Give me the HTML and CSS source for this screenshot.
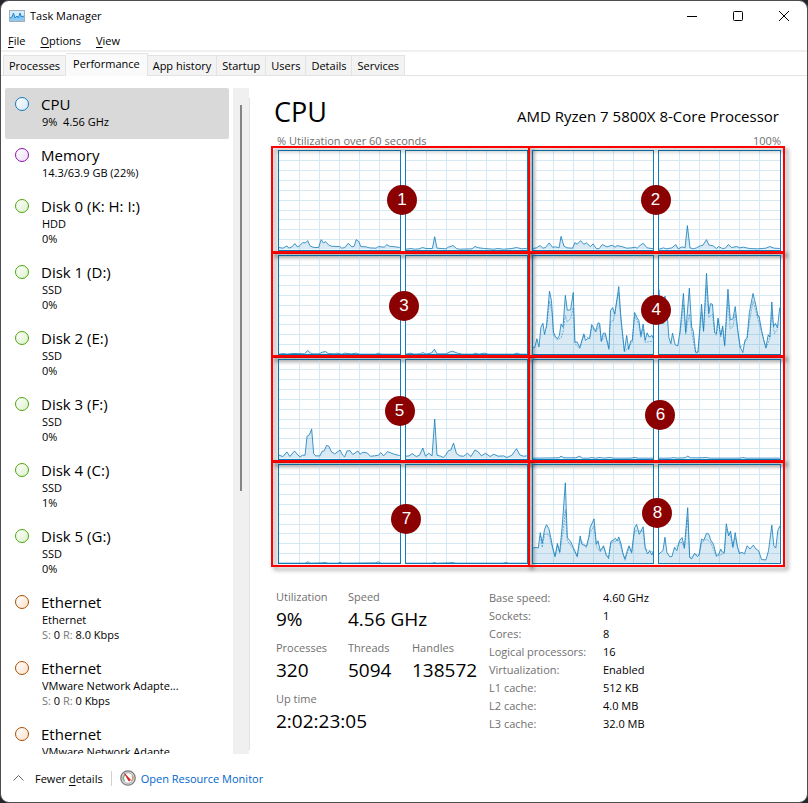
FILE: index.html
```html
<!DOCTYPE html>
<html lang="en">
<head>
<meta charset="utf-8">
<meta name="viewport" content="width=device-width, initial-scale=1">
<title>Task Manager</title>
<link rel="stylesheet" href="styles.css">
</head>
<body>
<div class="window">
  <header class="titlebar">
    <svg class="app-icon" viewBox="0 0 16 12" aria-hidden="true">
      <rect x=".5" y=".5" width="15" height="11" fill="#d5edfb" stroke="#a5adb3"/>
      <path d="M1 8 3 7 4.500 3 6 8 8 6 9.500 8 11 3 12.500 7 15 6V11H1Z" fill="#8bc9f2"/>
      <path d="M1 8 3 7 4.500 3 6 8 8 6 9.500 8 11 3 12.500 7 15 6" fill="none" stroke="#1c87cf"/>
    </svg>
    <h1 class="app-name">Task Manager</h1>
    <div class="window-controls">
      <button type="button" aria-label="Minimize"><svg viewBox="0 0 10 10"><path d="M0 5.500H10"/></svg></button>
      <button type="button" aria-label="Maximize"><svg viewBox="0 0 10 10"><rect x=".5" y=".5" width="9" height="9" rx="1"/></svg></button>
      <button type="button" aria-label="Close"><svg viewBox="0 0 10 10"><path d="M0 0 10 10M10 0 0 10"/></svg></button>
    </div>
  </header>
  <nav class="menu">
    <button type="button"><u>F</u>ile</button>
    <button type="button"><u>O</u>ptions</button>
    <button type="button"><u>V</u>iew</button>
  </nav>
  <div class="tabs" role="tablist">
    <button type="button" role="tab">Processes</button>
    <button type="button" role="tab" class="active" aria-selected="true">Performance</button>
    <button type="button" role="tab">App history</button>
    <button type="button" role="tab">Startup</button>
    <button type="button" role="tab">Users</button>
    <button type="button" role="tab">Details</button>
    <button type="button" role="tab">Services</button>
  </div>
  <main class="content">
    <ul class="devices">
      <li class="device cpu selected"><h2>CPU</h2><p>9%&nbsp; 4.56 GHz</p></li>
      <li class="device memory"><h2>Memory</h2><p>14.3/63.9 GB (22%)</p></li>
      <li class="device disk"><h2>Disk 0 (K: H: I:)</h2><p>HDD</p><p>0%</p></li>
      <li class="device disk"><h2>Disk 1 (D:)</h2><p>SSD</p><p>0%</p></li>
      <li class="device disk"><h2>Disk 2 (E:)</h2><p>SSD</p><p>0%</p></li>
      <li class="device disk"><h2>Disk 3 (F:)</h2><p>SSD</p><p>0%</p></li>
      <li class="device disk"><h2>Disk 4 (C:)</h2><p>SSD</p><p>1%</p></li>
      <li class="device disk"><h2>Disk 5 (G:)</h2><p>SSD</p><p>0%</p></li>
      <li class="device network"><h2>Ethernet</h2><p>Ethernet</p><p><span>S:</span> 0 <span>R:</span> 8.0 Kbps</p></li>
      <li class="device network"><h2>Ethernet</h2><p>VMware Network Adapte...</p><p><span>S:</span> 0 <span>R:</span> 0 Kbps</p></li>
      <li class="device network"><h2>Ethernet</h2><p>VMware Network Adapte...</p></li>
    </ul>
    <div class="scrollbar"><div class="thumb"></div></div>
    <section class="detail">
      <div class="heading"><h2>CPU</h2><p>AMD Ryzen 7 5800X 8-Core Processor</p></div>
      <div class="axis"><span>% Utilization over 60 seconds</span><span>100%</span></div>
      <div class="cores" id="cores"></div>
      <div class="stats">
        <dl class="live">
          <div><dt>Utilization</dt><dd>9%</dd></div>
          <div class="wide"><dt>Speed</dt><dd>4.56 GHz</dd></div>
          <div><dt>Processes</dt><dd>320</dd></div>
          <div><dt>Threads</dt><dd>5094</dd></div>
          <div><dt>Handles</dt><dd>138572</dd></div>
          <div class="wide"><dt>Up time</dt><dd>2:02:23:05</dd></div>
        </dl>
        <dl class="facts">
          <dt>Base speed:</dt><dd>4.60 GHz</dd>
          <dt>Sockets:</dt><dd>1</dd>
          <dt>Cores:</dt><dd>8</dd>
          <dt>Logical processors:</dt><dd>16</dd>
          <dt>Virtualization:</dt><dd>Enabled</dd>
          <dt>L1 cache:</dt><dd>512 KB</dd>
          <dt>L2 cache:</dt><dd>4.0 MB</dd>
          <dt>L3 cache:</dt><dd>32.0 MB</dd>
        </dl>
      </div>
    </section>
  </main>
  <footer class="footer">
    <button type="button" class="fewer">
      <svg viewBox="0 0 11 6" aria-hidden="true"><path d="M.5 5.500 5.500 .5 10.500 5.500"/></svg>
      <span>Fewer <u>d</u>etails</span>
    </button>
    <a class="monitor" href="#">
      <svg viewBox="0 0 16 16" aria-hidden="true">
        <circle cx="8" cy="8" r="7.200" fill="#e4e4e4" stroke="#77797b" stroke-width="1.300"/>
        <circle cx="8" cy="8" r="5.300" fill="#fff" stroke="#a8a8a8"/>
        <path d="M4.500 11A5 5 0 0 1 4.500 5" fill="none" stroke="#6aa06a"/>
        <path d="M12 5.500A5 5 0 0 1 11.500 11" fill="none" stroke="#e08a50"/>
        <path d="M4.500 3.500 10.500 10 9 11Z" fill="#d8101e" stroke="#d8101e" stroke-width=".8"/>
      </svg>
      <span>Open Resource Monitor</span>
    </a>
  </footer>
</div>
<script src="charts.js"></script>
</body>
</html>
```

FILE: styles.css
```css
* { box-sizing: border-box; margin: 0; padding: 0; }
body { background: #23272c; color: #000; font: 11px/15px "Open Sans", "Noto Sans", sans-serif; }
button { background: none; border: 0; font: inherit; color: inherit; }
u { text-underline-offset: 2px; }
h1, h2 { font-weight: 400; }

.window { display: flex; flex-direction: column; height: 100vh; background: #fff; border: 1px solid #4b4d50; border-radius: 9px; overflow: hidden; }

.titlebar { display: flex; align-items: center; height: 29px; padding-left: 8px; flex: none; }
.app-icon { width: 16px; height: 12px; }
.app-name { margin-left: 5px; font-size: 11px; }
.window-controls { display: flex; margin-left: auto; height: 100%; }
.window-controls button { display: grid; place-items: center; width: 46px; }
.window-controls svg { width: 10px; height: 10px; overflow: visible; fill: none; stroke: #000; stroke-width: 1px; }

.menu { display: flex; gap: 15px; height: 22px; padding: 3px 7px 2px; border-bottom: 2px solid #f0f0f0; flex: none; }

.tabs { display: flex; align-items: flex-end; height: 24px; padding-left: 2px; border-bottom: 1px solid #e3e3e3; flex: none; }
.tabs button { height: 20px; padding: 0 5px; background: #f3f3f3; border: 1px solid #e3e3e3; border-left: 0; border-bottom: 0; }
.tabs button:first-child { border-left: 1px solid #e3e3e3; }
.tabs .active { height: 23px; margin-bottom: -1px; padding: 0 7px 3px; background: #fafafa; }

.content { display: flex; flex: 1; min-height: 0; padding: 12px 0 0 4px; }
.devices { width: 224px; flex: none; list-style: none; overflow: hidden; }
.device { position: relative; padding: 6px 8px 10px 37px; border-radius: 2px; }
.device.selected { background: #d9d9d9; }
.device h2 { margin-left: -1px; font-size: 15px; line-height: 20px; }
.device p { white-space: nowrap; overflow: hidden; }
.device span { color: #777; }
.device::before { content: ""; position: absolute; left: 11px; top: 10px; width: 14px; height: 14px; border: 1px solid; border-radius: 50%; }
.device::before { left: 10px; top: 9px; box-sizing: border-box; }
.cpu::before { border-color: #117dbb; background: linear-gradient(135deg, #fff, #d5e9f5); }
.memory::before { border-color: #8b12ae; background: linear-gradient(135deg, #fff, #efdff5); }
.disk::before { border-color: #4da60c; background: linear-gradient(135deg, #fff, #dcf1cb); }
.network::before { border-color: #a74f01; background: linear-gradient(135deg, #fff, #fbe2cd); }

.scrollbar { width: 16px; margin-left: 4px; padding: 17px 7px; background: #f0f0f0; flex: none; }
.thumb { width: 2px; height: 61%; background: #858585; }

.detail { flex: 1; min-width: 0; margin: 10px 0 4px; padding: 0 26px 0 24px; border-left: 1px solid #e3e3e3; }
.heading { display: flex; justify-content: space-between; align-items: baseline; }
.heading h2 { font-size: 27px; line-height: 28px; }
.heading p { padding-right: 2px; font-size: 15px; line-height: 28px; }
.axis { display: flex; justify-content: space-between; margin-top: 3px; padding-left: 3px; color: #707070; }

.cores { display: grid; grid-template: repeat(4, 1fr) / 1fr 1fr; gap: 4px; height: 414px; margin: 2px 0 0 4px; }
.core { position: relative; display: grid; grid-template-columns: 1fr 1fr; gap: 4px; min-height: 0; }
.plot { width: 100%; height: 100%; min-height: 0; border: 1px solid #117dbb; overflow: hidden; }
.plot path { fill: none; vector-effect: non-scaling-stroke; }
.plot .grid { stroke: #d6e8f3; shape-rendering: crispEdges; }
.plot .area { fill: #117dbb; fill-opacity: .16; }
.plot .line { stroke: #117dbb; stroke-opacity: .8; }
.plot .kernel { stroke: #117dbb; stroke-opacity: .5; stroke-dasharray: 2 1; }
.frame { position: absolute; inset: -4px -2px -3px -7px; border: 2px solid #f00; filter: drop-shadow(3px 3px 2px rgba(0, 0, 0, .45)); }
.core:nth-child(even) .frame { inset: -4px -4px -3px -4px; }
.badge { position: absolute; z-index: 1; width: 30px; height: 30px; border-radius: 50%; transform: translate(-50%, -50%); background: #8b0000; color: #fff; font: 17px/30px "Liberation Sans", sans-serif; text-align: center; }

.stats { display: flex; margin: 25px 0 0 2px; }
.stats dt { color: #707070; }
.live { display: grid; grid-template-columns: 72px 64px 77px; row-gap: 7px; align-content: start; }
.live dt { line-height: 16px; }
.live dd { font-size: 19px; line-height: 28px; white-space: nowrap; }
.live .wide { grid-column: span 2; }
.facts { display: grid; grid-template-columns: 114px auto; align-content: start; line-height: 18px; }

.footer { display: flex; align-items: center; height: 48px; padding-left: 12px; flex: none; }
.fewer { display: flex; align-items: center; gap: 11px; padding-right: 8px; border-right: 1px solid #d0d0d0; }
.fewer svg { width: 11px; height: 6px; fill: none; stroke: #666; }
.monitor { display: flex; align-items: center; gap: 5px; margin-left: 8px; color: #0066cc; text-decoration: none; }
.monitor svg { width: 16px; height: 16px; }
```

FILE: charts.js
```js
// Each plot: x of its left edge, y of its baseline, "x,y" samples, optional kernel-time samples.
// A plot spans 366 by 300 units. `at` is the badge centre, in percent of the core's box.
const cores = [
  { at: [49.7, 49.3], plots: [
    [56, 508, "56,502 68,504 80,497 86,504 95,500 104,490 112,500 118,497 128,487 136,488 143,481 150,497 162,502 176,502 184,478 191,488 197,484 206,494 215,498 240,499 246,504 256,502 266,489 277,500 284,498 290,478 298,484 304,499 320,500 330,503 350,504 358,499 375,501 383,493 390,498 410,500 422,502"],
    [434, 508, "434,507 450,505 460,507 474,506 484,502 495,505 514,505 521,469 528,504 555,506 562,501 577,496 587,505 596,507 634,506 643,499 655,503 672,505 700,507 712,505 730,507 755,505 769,502 785,506 800,505"]] },
  { at: [49.7, 50], plots: [
    [36, 508, "36,505 46,503 57,496 66,504 74,502 85,488 95,501 105,500 115,503 121,468 130,498 139,503 156,504 163,487 170,492 180,481 190,492 198,488 210,499 218,491 228,505 236,506 246,493 260,500 276,495 286,501 290,496 308,500 320,504 335,503 345,501 352,504 360,496 370,489 382,503 402,506"],
    [416, 508, "416,507 430,503 438,506 455,503 467,493 474,506 486,500 495,503 502,435 510,503 520,506 530,503 541,497 549,495 560,478 567,494 580,497 590,505 597,499 608,505 617,504 626,493 636,502 652,499 660,503 672,501 690,505 715,506 740,504 752,499 765,504 782,505"]] },
  { at: [50.5, 51.7], plots: [
    [41, 313, "41,312 55,310 65,312 80,310 100,310 118,311 128,301 137,309 144,311 162,311 172,306 182,304 190,310 210,311 217,309 232,312 240,309 260,311 275,309 285,312 335,312 343,309 350,312 407,312"],
    [419, 313, "419,312 432,309 445,312 462,311 470,307 480,312 497,308 505,297 513,311 540,311 550,306 560,303 575,309 590,312 622,312 630,309 640,312 657,309 668,312 745,312 755,309 765,312 785,312"]] },
  { at: [50, 55.7], plots: [
    [36, 313, "36,292 41,292 48,265 54,290 60,230 66,218 71,252 77,225 86,120 92,150 98,245 104,258 110,265 116,255 121,220 127,230 134,133 140,178 150,177 158,124 163,275 170,275 178,292 190,250 195,270 201,265 208,262 214,222 226,242 233,217 238,218 243,272 249,248 255,248 266,295 271,180 277,170 284,190 296,106 302,195 307,245 313,303 320,255 326,298 332,272 337,270 344,185 351,200 357,210 363,255 370,220 376,270 382,247 388,260 397,255 402,268",
      "77,232 86,150 94,185 98,255 110,268 121,262 127,245 134,195 140,213 150,203 158,170 163,280 178,295 190,254 208,266 214,228 226,246 238,224 243,275 255,252 266,298 271,212 280,210 290,150 296,125 302,205 313,306 337,275 344,195 357,222 363,262 370,235 376,276 402,272"],
    [416, 313, "416,115 422,210 428,220 434,135 440,180 446,262 452,280 457,248 465,283 473,287 480,240 490,127 497,245 508,111 515,230 520,242 527,306 534,306 545,160 551,240 560,66 567,188 572,158 578,160 585,245 590,250 595,202 603,255 609,226 615,285 625,114 632,207 640,205 647,167 655,240 662,290 670,307 677,268 683,262 690,185 701,127 710,165 716,197 719,195 727,240 734,270 740,292 747,253 752,260 758,153 763,228 769,218 775,232 782,170",
      "480,250 490,160 497,252 503,215 508,190 515,245 527,308 534,308 545,185 551,245 560,105 567,200 578,190 585,250 590,254 595,208 603,259 609,232 615,288 625,145 632,235 640,228 647,190 662,293 683,268 690,215 701,150 716,205 727,245 740,295 752,264 758,185 766,250 775,235"]] },
  { at: [48.7, 52], plots: [
    [41, 310, "41,300 53,304 65,290 74,304 88,287 98,299 105,305 112,300 120,300 126,242 133,238 140,220 146,295 152,302 165,302 172,288 178,287 185,270 192,273 200,290 210,296 226,284 234,300 240,305 247,287 256,286 265,298 280,287 287,297 295,291 308,293 318,303 330,302 342,300 350,292 358,302 370,289 390,297 407,301"],
    [419, 310, "419,303 428,302 438,295 450,304 460,300 470,278 478,303 488,294 498,302 506,190 513,300 524,303 532,307 540,298 548,286 555,284 563,263 572,295 582,302 594,303 605,294 616,304 628,284 638,290 648,302 660,294 674,304 685,297 698,303 715,302 725,307 740,300 754,280 764,299 775,303 785,302"]] },
  { at: [51.7, 56], plots: [
    [36, 324, "36,323 115,322 121,317 130,322 165,322 178,317 185,323 205,323 214,321 225,323 240,321 250,323 270,321 280,323 330,323 345,321 355,323 402,323"],
    [416, 324, "416,323 450,323 460,321 470,323 495,322 503,317 512,322 540,322 560,321 570,323 660,323 670,321 680,323 782,323"]] },
  { at: [51.5, 55.7], plots: [
    [41, 324, "41,323 120,323 128,319 135,323 170,322 180,321 190,323 220,323 226,320 232,323 335,322 342,319 350,323 407,323"],
    [419, 324, "419,323 498,323 505,321 512,323 550,322 560,321 570,323 712,323 722,321 730,323 785,323"]] },
  { at: [50.5, 49.7], plots: [
    [36, 639, "36,592 45,590 52,592 58,545 64,577 71,535 77,521 84,533 90,560 96,592 103,617 110,578 117,604 125,520 134,393 140,560 150,572 158,590 170,617 179,555 184,580 198,587 205,560 209,530 221,503 228,580 233,570 240,600 250,585 258,615 265,622 272,572 280,567 286,562 291,570 296,558 303,580 309,610 315,625 320,605 327,585 335,605 344,530 350,520 358,550 370,527 376,590 383,610 390,600 396,613 402,600",
      "58,555 64,590 71,550 84,550 96,596 103,620 110,584 117,608 128,535 134,475 140,570 158,594 170,620 179,565 198,590 209,545 221,525 228,588 240,604 250,590 265,625 272,576 296,568 315,630 327,590 335,608 344,540 370,540 376,595 402,605"],
    [416, 639, "416,610 424,603 428,600 434,559 440,605 448,618 455,618 463,590 470,600 478,570 486,560 493,590 503,469 509,620 515,625 524,608 533,618 538,610 545,565 552,568 560,547 567,550 573,568 581,580 590,615 598,610 603,595 609,605 614,605 620,518 627,555 633,540 640,588 647,545 654,590 660,608 668,605 675,610 683,585 692,595 702,583 710,595 718,600 727,627 740,628 748,600 758,522 764,585 770,592 776,540 782,525",
      "463,595 478,575 486,575 493,595 503,500 509,623 524,612 538,613 545,575 560,565 573,575 590,618 614,608 620,535 633,555 640,592 647,560 660,610"]] }
];

let grid = "";
for (let i = 1; i < 6; i++) grid += `M${i * 61} 0V300`;
for (let i = 1; i < 10; i++) grid += `M0 ${i * 30}H366`;

function plot([left, base, samples, kernel]) {
  const shift = `translate(${-left} ${300 - base})`;
  const points = samples.split(" ");
  const end = points[points.length - 1].split(",")[0];
  return `<svg class="plot" viewBox="0 0 366 300" preserveAspectRatio="none" aria-hidden="true">
    <path class="grid" d="${grid}"/>
    <g transform="${shift}">
      <path class="area" d="M${left},${base} ${samples} ${end},${base}Z"/>
      ${kernel ? `<path class="kernel" d="M${kernel}"/>` : ""}
      <path class="line" d="M${samples}"/>
    </g></svg>`;
}

document.getElementById("cores").innerHTML = cores.map((core, i) =>
  `<div class="core">${core.plots.map(plot).join("")}<div class="frame"></div>` +
  `<span class="badge" style="left:${core.at[0]}%;top:${core.at[1]}%">${i + 1}</span></div>`
).join("");
```
